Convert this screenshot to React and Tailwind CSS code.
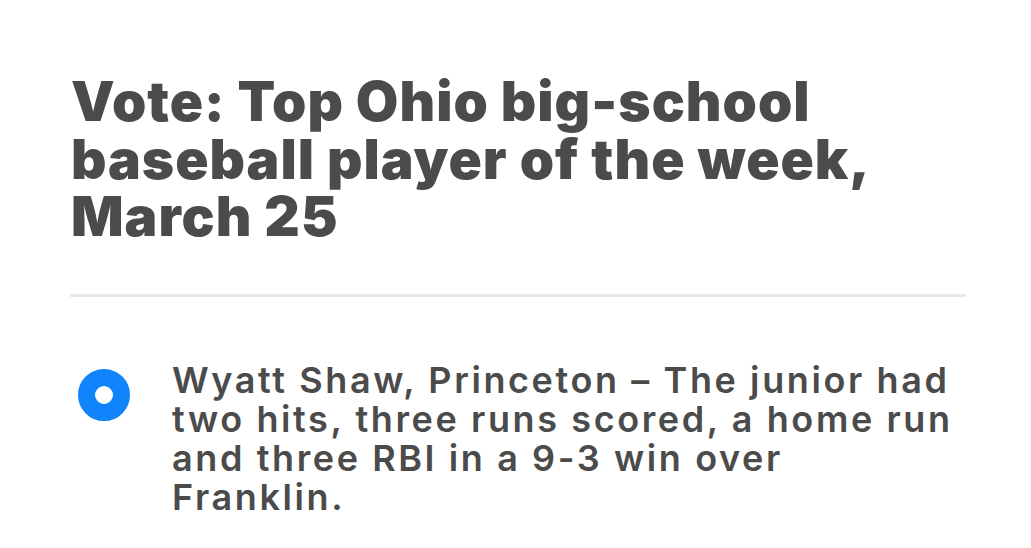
export default function App() {
  return (
    <div className="w-[1031px] h-[548px] bg-white overflow-hidden" style={{ fontFamily: 'Inter, "Noto Sans", sans-serif' }}>
      <div className="pl-[70px] pt-[73px] w-[966px]">
        <h1 className="text-[55px] leading-[57.5px] font-black text-[#4b4b4b] tracking-[1px] pl-[1px]">
          Vote: Top Ohio big-school baseball player of the week, March 25
        </h1>
        <div className="mt-[48px] h-[3px] bg-[#e8e8e8]"></div>
        <div className="mt-[64px] flex items-start">
          <div className="ml-[8px] mt-[8px] w-[52px] h-[52px] rounded-full border-[17px] border-[#0f84fb] shrink-0"></div>
          <p className="ml-[42px] w-[788px] text-[36px] leading-[39px] font-semibold tracking-[2.6px] text-[#4b4b4b]">
            Wyatt Shaw, Princeton – The junior had two hits, three runs scored, a home run and three RBI in a 9-3 win over Franklin.
          </p>
        </div>
      </div>
    </div>
  );
}
